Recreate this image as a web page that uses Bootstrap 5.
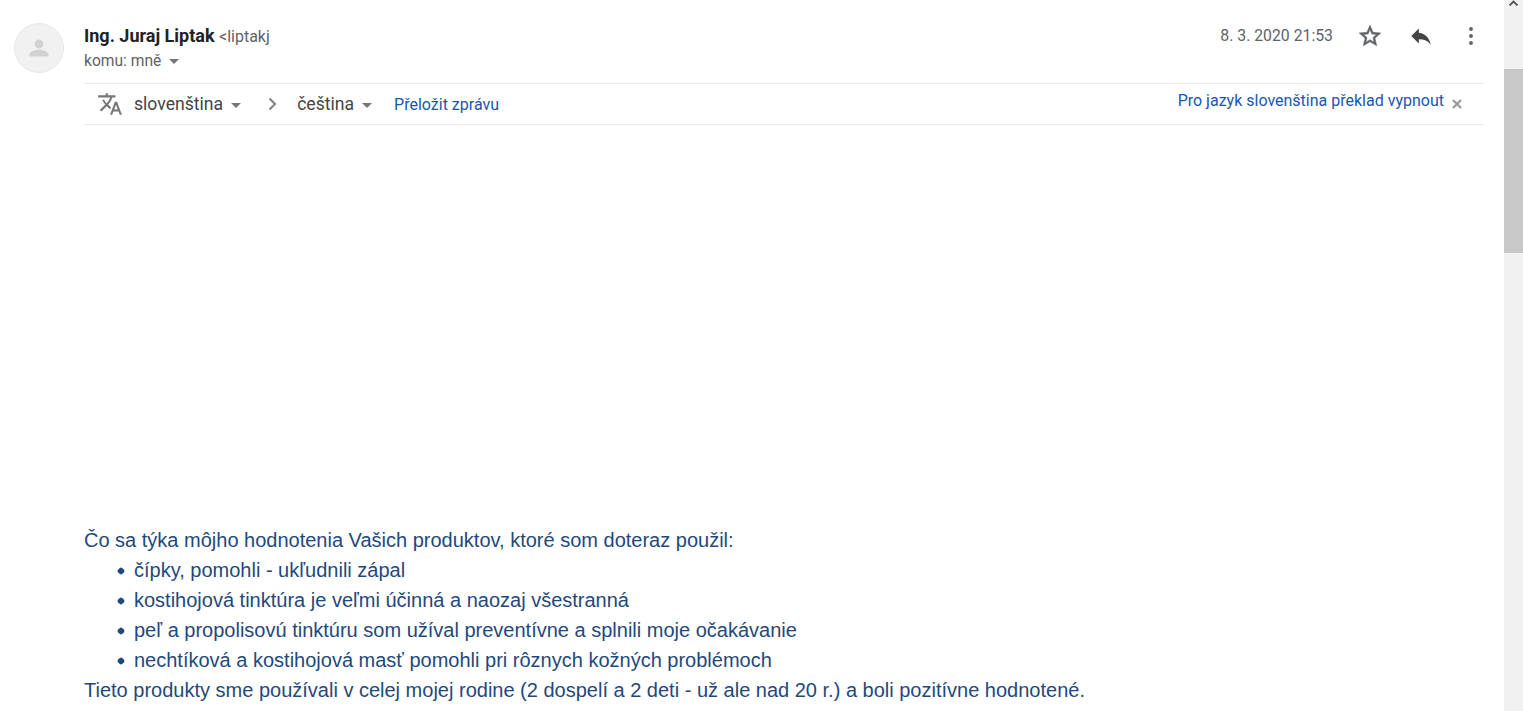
<!DOCTYPE html>
<html lang="sk">
<head>
<meta charset="utf-8">
<title>Email</title>
<link href="https://cdn.jsdelivr.net/npm/bootstrap@5.3.0/dist/css/bootstrap.min.css" rel="stylesheet">
<style>
html, body { height: 711px; overflow: hidden; background: #fff; }
body { font-family: Roboto, sans-serif; color: #202124; }
.shell { height: 711px; }
.mail { width: 1504px; padding: 23px 20px 0 14px; }
.avatar-disc { width: 50px; height: 50px; border-radius: 50%; background: #f1f1f1; border: 1px solid #e8e8e8; margin-right: 20px; }
.head-line { height: 60px; }
.who { font-size: 18px; font-weight: 700; line-height: 26px; color: #222; }
.addr { font-size: 16px; font-weight: 400; color: #5f6368; }
.komu { font-size: 15.6px; line-height: 22px; color: #5f6368; }
.caret-down { display: inline-block; width: 0; height: 0; border-left: 5px solid transparent; border-right: 5px solid transparent; border-top: 5px solid #777; }
.stamp { font-size: 15.8px; line-height: 26px; color: #5f6368; margin-right: 24px; }
.act-gap { gap: 24.5px; height: 26px; }
.trans-bar { height: 42px; border-top: 1px solid #e8eaed; border-bottom: 1px solid #e8eaed; font-size: 17.6px; color: #444; padding-left: 13px; padding-right: 19px; }
.lang { margin-left: 11px; }
.lang-caret { margin-left: 8px; vertical-align: 2px; }
.chevron { margin: 0 18px 0 26px; }
.tlink { font-size: 16px; color: #1a56b0; text-decoration: none; margin-left: 22px; margin-top: 2px; }
.off-link { font-size: 16px; color: #1a56b0; margin-top: -7px; }
.off-x { margin-left: 8px; margin-right: 3px; }
.spacer-gap { height: 400px; }
.msg { font-family: "Liberation Sans", sans-serif; font-size: 20px; line-height: 30px; color: #1f497d; }
.msg ul { margin: 0; padding-left: 50px; list-style: none; }
.msg li { position: relative; }
.msg li::before { content: ""; position: absolute; left: -16px; top: 12.500px; width: 6px; height: 6px; transform: rotate(45deg); border-radius: 2px; background: #1f497d; }
.rail { width: 19px; background: #f1f1f1; }
.rail-thumb { height: 184px; margin-top: 69px; background: #c8c8c8; }
.rail-arrow { top: 0; left: 0; }
</style>
</head>
<body>
<div class="shell d-flex">
  <main class="mail flex-shrink-0">
    <div class="d-flex">
      <div class="avatar-disc flex-shrink-0 d-flex align-items-center justify-content-center">
        <svg width="24" height="24" viewBox="0 0 24 24" aria-hidden="true"><circle cx="12" cy="8" r="4.400" fill="#d2d2d2"/><path d="M2.500 20.500v-2c0-3.200 6.300-4.800 9.500-4.800s9.500 1.600 9.500 4.800v2z" fill="#d2d2d2"/></svg>
      </div>
      <div class="flex-grow-1 min-w-0">
        <div class="head-line d-flex justify-content-between align-items-start">
          <div>
            <div class="who">Ing. Juraj Liptak <span class="addr">&lt;liptakj</span></div>
            <div class="komu">komu: mně <span class="caret-down ms-1 align-middle"></span></div>
          </div>
          <div class="d-flex align-items-center">
            <span class="stamp">8. 3. 2020 21:53</span>
            <div class="d-flex align-items-center act-gap">
              <svg width="26" height="26" viewBox="0 0 24 24" aria-hidden="true"><path d="M22 9.240l-7.190-.62L12 2 9.190 8.630 2 9.240l5.460 4.730L5.820 21 12 17.270 18.180 21l-1.630-7.030L22 9.240zM12 15.400l-3.760 2.270 1-4.280-3.320-2.880 4.380-.38L12 6.100l1.710 4.040 4.380.38-3.320 2.880 1 4.280L12 15.400z" fill="#5f6368" stroke="#5f6368" stroke-width=".5"/></svg>
              <svg width="26" height="26" viewBox="0 0 24 24" aria-hidden="true"><path d="M10 9V5l-7 7 7 7v-4.100c5 0 8.500 1.600 11 5.100-1-5-4-10-11-11z" fill="#444"/></svg>
              <svg width="26" height="26" viewBox="0 0 24 24" aria-hidden="true"><circle cx="12" cy="5.500" r="1.800" fill="#5f6368"/><circle cx="12" cy="12" r="1.800" fill="#5f6368"/><circle cx="12" cy="18.500" r="1.800" fill="#5f6368"/></svg>
            </div>
          </div>
        </div>
        <div class="trans-bar d-flex align-items-center justify-content-between">
          <div class="d-flex align-items-center">
            <svg width="26" height="26" viewBox="0 0 24 24" aria-hidden="true"><path d="M12.870 15.070l-2.540-2.510.030-.03c1.740-1.940 2.980-4.170 3.710-6.530H17V4h-7V2H8v2H1v1.990h11.170C11.500 7.920 10.440 9.750 9 11.350 8.070 10.320 7.300 9.190 6.690 8h-2c.73 1.630 1.730 3.170 2.980 4.560l-5.090 5.020L4 19l5-5 3.110 3.110.76-2.040zM18.500 10h-2L12 22h2l1.120-3h4.750L21 22h2l-4.500-12zm-2.620 7l1.620-4.330L19.120 17h-3.240z" fill="#777"/></svg>
            <span class="lang">slovenština<span class="caret-down lang-caret"></span></span>
            <svg class="chevron" width="12" height="16" viewBox="0 0 12 16" aria-hidden="true"><path d="M2.500 2.500l5.500 5.500-5.500 5.500" fill="none" stroke="#888" stroke-width="2.200"/></svg>
            <span>čeština<span class="caret-down lang-caret"></span></span>
            <a class="tlink" href="#">Přeložit zprávu</a>
          </div>
          <div class="d-flex align-items-center">
            <span class="off-link">Pro jazyk slovenština překlad vypnout</span>
            <svg class="off-x" width="10" height="10" viewBox="0 0 10 10" aria-hidden="true"><path d="M1 1l8 8M9 1l-8 8" stroke="#999" stroke-width="2.200"/></svg>
          </div>
        </div>
        <div class="spacer-gap"></div>
        <div class="msg">
          Čo sa týka môjho hodnotenia Vašich produktov, ktoré som doteraz použil:
          <ul>
            <li>čípky, pomohli - ukľudnili zápal</li>
            <li>kostihojová tinktúra je veľmi účinná a naozaj všestranná</li>
            <li>peľ a propolisovú tinktúru som užíval preventívne a splnili moje očakávanie</li>
            <li>nechtíková a kostihojová masť pomohli pri rôznych kožných problémoch</li>
          </ul>
          Tieto produkty sme používali v celej mojej rodine (2 dospelí a 2 deti - už ale nad 20 r.) a boli pozitívne hodnotené.
        </div>
      </div>
    </div>
  </main>
  <div class="rail position-relative flex-shrink-0">
    <svg class="rail-arrow position-absolute" width="19" height="6" viewBox="0 0 19 6" aria-hidden="true"><path d="M5.500 5.500l4-4 4 4" fill="none" stroke="#555" stroke-width="1.800"/></svg>
    <div class="rail-thumb"></div>
  </div>
</div>
<script src="https://cdn.jsdelivr.net/npm/bootstrap@5.3.0/dist/js/bootstrap.bundle.min.js"></script>
</body>
</html>
